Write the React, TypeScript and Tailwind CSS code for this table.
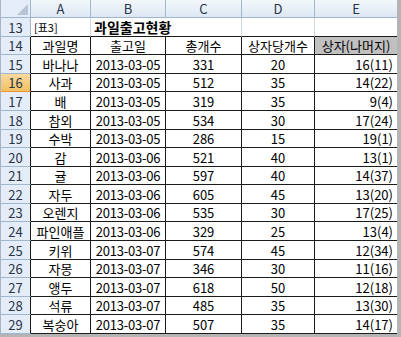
import React from 'react';

interface Fruit {
  name: string;
  date: string;
  total: number;
  perBox: number;
}

const fruits: Fruit[] = [
  { name: '바나나', date: '2013-03-05', total: 331, perBox: 20 },
  { name: '사과', date: '2013-03-05', total: 512, perBox: 35 },
  { name: '배', date: '2013-03-05', total: 319, perBox: 35 },
  { name: '참외', date: '2013-03-05', total: 534, perBox: 30 },
  { name: '수박', date: '2013-03-05', total: 286, perBox: 15 },
  { name: '감', date: '2013-03-06', total: 521, perBox: 40 },
  { name: '귤', date: '2013-03-06', total: 597, perBox: 40 },
  { name: '자두', date: '2013-03-06', total: 605, perBox: 45 },
  { name: '오렌지', date: '2013-03-06', total: 535, perBox: 30 },
  { name: '파인애플', date: '2013-03-06', total: 329, perBox: 25 },
  { name: '키위', date: '2013-03-07', total: 574, perBox: 45 },
  { name: '자몽', date: '2013-03-07', total: 346, perBox: 30 },
  { name: '앵두', date: '2013-03-07', total: 618, perBox: 50 },
  { name: '석류', date: '2013-03-07', total: 485, perBox: 35 },
  { name: '복숭아', date: '2013-03-07', total: 507, perBox: 35 },
];

// rows 13..29 share 316px, so heights alternate between 18 and 19
const rowH = (i: number) => Math.round((i + 1) * 18.59) - Math.round(i * 18.59);

const font = { fontFamily: '"Malgun Gothic", "Noto Sans CJK KR", "Noto Sans", sans-serif' };

const colHead = 'flex items-center justify-center border-r border-[#9eb6ce] bg-gradient-to-b from-[#f3f7fc] to-[#dde7f4] text-[#27344a]';
const cell = 'flex items-center whitespace-nowrap border-r border-b border-[#1a1a1a]';

function RowHead({ n, active, dark }: { n: number; active?: boolean; dark?: boolean }) {
  return (
    <div
      className={
        'flex w-[30px] shrink-0 items-center justify-center border-b border-r ' +
        (active
          ? 'border-b-[#f29436] bg-gradient-to-b from-[#f9d99f] to-[#f1c15f] text-[#27344a]'
          : 'border-b-[#9eb6ce] bg-[#e4ecf7] text-[#27344a]') +
        (dark ? ' border-r-[#1a1a1a]' : ' border-r-[#9eb6ce]')
      }
    >
      {n}
    </div>
  );
}

export default function App() {
  return (
    <div className="w-[401px] h-[337px] overflow-hidden bg-white text-[13px] leading-none text-black" style={font}>
      <div className="flex h-[337px] w-[401px] flex-col border-l border-r-4 border-b-[3px] border-l-[#a9b4c2] border-r-[#b4b4b4] border-b-[#b4b4b4]">
        {/* column headers */}
        <div className="flex h-[18px] shrink-0 border-b border-[#9eb6ce]">
          <div className="relative w-[30px] shrink-0 border-r border-[#9eb6ce] bg-[#e4ecf7]">
            <svg className="absolute right-[2px] bottom-[2px]" width="11" height="11" viewBox="0 0 11 11">
              <polygon points="11,0 11,11 0,11" fill="#b8c4d3" />
            </svg>
          </div>
          <div className={colHead + ' w-[60px]'}>A</div>
          <div className={colHead + ' w-[75px]'}>B</div>
          <div className={colHead + ' w-[76px]'}>C</div>
          <div className={colHead + ' w-[73px]'}>D</div>
          <div className={colHead + ' w-[82px] border-r-0'}>E</div>
        </div>

        {/* row 13: title */}
        <div className="flex shrink-0" style={{ height: rowH(0) }}>
          <RowHead n={13} />
          <div className="flex w-[60px] items-center border-r border-b border-r-[#d0d7e5] border-b-[#1a1a1a] px-[3px] text-[11px]">[표3]</div>
          <div className="flex w-[151px] items-center whitespace-nowrap border-r border-b border-r-[#d0d7e5] border-b-[#1a1a1a] px-[3px] font-bold text-[14px]">과일출고현황</div>
          <div className="w-[73px] border-r border-b border-r-[#d0d7e5] border-b-[#1a1a1a]" />
          <div className="w-[82px] border-b border-[#1a1a1a]" />
        </div>

        {/* row 14: table header */}
        <div className="flex shrink-0" style={{ height: rowH(1) }}>
          <RowHead n={14} dark />
          <div className={cell + ' w-[60px] justify-center'}>과일명</div>
          <div className={cell + ' w-[75px] justify-center'}>출고일</div>
          <div className={cell + ' w-[76px] justify-center'}>총개수</div>
          <div className={cell + ' w-[73px] justify-center'}>상자당개수</div>
          <div className={cell + ' w-[82px] justify-center border-r-0 bg-[#c0c0c0]'}>상자(나머지)</div>
        </div>

        {fruits.map((f, i) => (
          <div key={f.name} className="flex shrink-0" style={{ height: rowH(i + 2) }}>
            <RowHead n={15 + i} active={i === 1} dark />
            <div className={cell + ' w-[60px] justify-center'}>{f.name}</div>
            <div className={cell + ' w-[75px] justify-center tracking-[-0.2px]'}>{f.date}</div>
            <div className={cell + ' w-[76px] justify-center'}>{f.total}</div>
            <div className={cell + ' w-[73px] justify-center'}>{f.perBox}</div>
            <div className={cell + ' w-[82px] justify-end border-r-0 pr-[4px]'}>
              {Math.floor(f.total / f.perBox)}({f.total % f.perBox})
            </div>
          </div>
        ))}
      </div>
    </div>
  );
}
